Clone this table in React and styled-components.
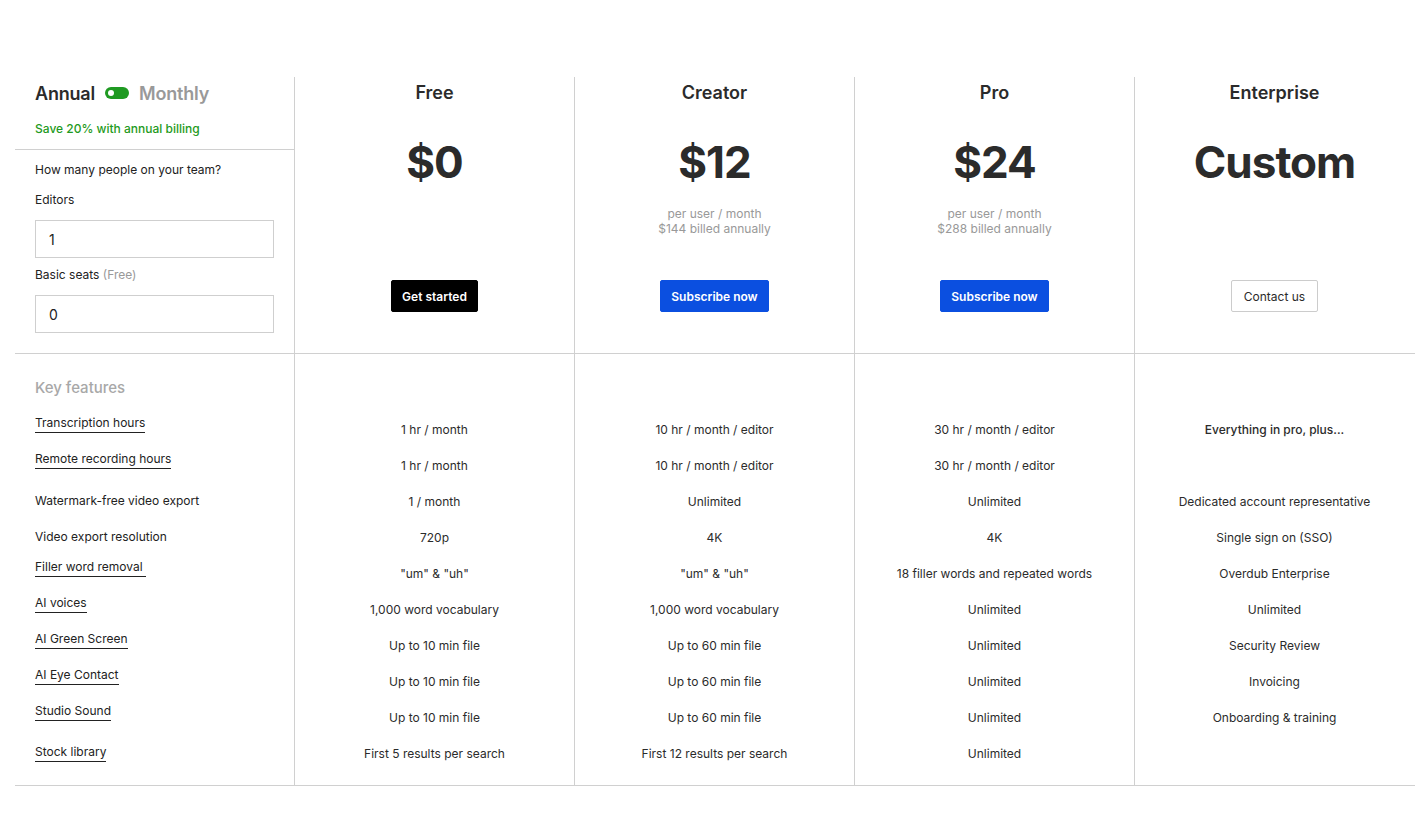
import React, { useState } from "react";
import styled, { createGlobalStyle } from "styled-components";

const GlobalStyle = createGlobalStyle`
  body {
    margin: 0;
    background: #fff;
    font-family: Inter, "Noto Sans", sans-serif;
    color: #333;
  }
`;

const Page = styled.div`
  padding: 77px 10px 28px 15px;
`;

const Section = styled.div`
  display: flex;
  width: 1400px;
  border-bottom: 1px solid #d0d0d0;
`;

const Column = styled.div`
  width: ${({ $first }) => ($first ? "279px" : "280px")};
  flex: none;
  box-sizing: border-box;
  display: flex;
  flex-direction: column;
  border-left: ${({ $first }) => ($first ? "none" : "1px solid #d0d0d0")};
`;

const PlanTop = styled(Column)`
  align-items: center;
  padding: 5px 0 41px;
`;

const BillingBlock = styled.div`
  padding: 4px 20px 12px;
  border-bottom: 1px solid #d0d0d0;
`;

const BillingRow = styled.div`
  display: flex;
  align-items: center;
  gap: 10px;
  height: 24px;
`;

const BillingLabel = styled.span`
  font-size: 18px;
  font-weight: 600;
  letter-spacing: -0.2px;
  color: ${({ $active }) => ($active ? "#2b2b2b" : "#999")};
  cursor: pointer;
`;

const Toggle = styled.button`
  position: relative;
  width: 24px;
  height: 12px;
  border: none;
  border-radius: 6px;
  background: #1f9a22;
  padding: 0;
  cursor: pointer;

  &::after {
    content: "";
    position: absolute;
    top: 3px;
    left: ${({ $on }) => ($on ? "15px" : "3px")};
    width: 6px;
    height: 6px;
    border-radius: 50%;
    background: #fff;
  }
`;

const SaveNote = styled.div`
  margin-top: 16px;
  font-size: 12px;
  line-height: 16px;
  font-weight: 500;
  color: #1f9a22;
`;

const TeamBlock = styled.div`
  padding: 12px 20px 20px;
  display: flex;
  flex-direction: column;
`;

const FieldLabel = styled.div`
  font-size: 12px;
  line-height: 16px;
  color: #222;
  margin-top: ${({ $gap }) => $gap}px;

  span {
    color: #999;
  }
`;

const Input = styled.input`
  box-sizing: border-box;
  height: 38px;
  width: 239px;
  margin-top: 12px;
  border: 1px solid #cfcfcf;
  padding: 0 13px;
  font-family: inherit;
  font-size: 14px;
  color: #222;
  outline: none;
`;

const PlanName = styled.div`
  font-size: 18px;
  line-height: 22px;
  font-weight: 600;
  color: #2b2b2b;
`;

const Price = styled.div`
  margin-top: 32px;
  font-size: 44px;
  line-height: 52px;
  font-weight: 700;
  color: #2b2b2b;
  letter-spacing: -1px;
`;

const PriceNote = styled.div`
  margin-top: 18px;
  font-size: 12px;
  line-height: 15px;
  color: #999;
  text-align: center;
`;

const Button = styled.button`
  margin-top: auto;
  height: 32px;
  padding: 0 ${({ $variant }) => ($variant === "outline" ? 12 : 10)}px;
  border-radius: 2px;
  font-family: inherit;
  font-size: 12px;
  font-weight: ${({ $variant }) => ($variant === "outline" ? 400 : 600)};
  cursor: pointer;
  border: 1px solid
    ${({ $variant }) =>
      $variant === "dark" ? "#000" : $variant === "blue" ? "#0b4fe0" : "#cccccc"};
  background: ${({ $variant }) =>
    $variant === "dark" ? "#000" : $variant === "blue" ? "#0b4fe0" : "#fff"};
  color: ${({ $variant }) => ($variant === "outline" ? "#2b2b2b" : "#fff")};
`;

const FeatureColumn = styled(Column)`
  padding: 15px 0 14px;
`;

const KeyHeading = styled.div`
  height: 36px;
  margin-bottom: 6px;
  padding: 0 20px;
  display: flex;
  align-items: center;
  font-size: 15px;
  font-weight: 500;
  color: #a8a8a8;
`;

const Cell = styled.div`
  height: 36px;
  display: flex;
  align-items: center;
  justify-content: ${({ $left }) => ($left ? "flex-start" : "center")};
  padding: 0 20px;
  font-size: 12px;
  color: #2b2b2b;
  font-weight: ${({ $strong }) => ($strong ? 500 : 400)};
  text-align: center;
`;

const FeatureLabel = styled.span`
  white-space: pre;
  line-height: 16px;
  color: #222;
  ${({ $underline }) => ($underline ? "border-bottom: 1px solid #222; padding-bottom: 1px;" : "")}
  margin-bottom: ${({ $lift }) => $lift}px;
  cursor: ${({ $underline }) => ($underline ? "help" : "default")};
`;

const plans = [
  { name: "Free", price: "$0", button: "Get started", variant: "dark" },
  {
    name: "Creator",
    price: "$12",
    note: ["per user / month", "$144 billed annually"],
    button: "Subscribe now",
    variant: "blue",
  },
  {
    name: "Pro",
    price: "$24",
    note: ["per user / month", "$288 billed annually"],
    button: "Subscribe now",
    variant: "blue",
  },
  { name: "Enterprise", price: "Custom", button: "Contact us", variant: "outline" },
];

const features = [
  { label: "Transcription hours", u: true, values: ["1 hr / month", "10 hr / month / editor", "30 hr / month / editor", "Everything in pro, plus..."] },
  { label: "Remote recording hours", u: true, values: ["1 hr / month", "10 hr / month / editor", "30 hr / month / editor", ""] },
  { label: "Watermark-free video export", values: ["1 / month", "Unlimited", "Unlimited", "Dedicated account representative"] },
  { label: "Video export resolution", values: ["720p", "4K", "4K", "Single sign on (SSO)"] },
  { label: "Filler word removal ", u: true, values: ['"um" & "uh"', '"um" & "uh"', "18 filler words and repeated words", "Overdub Enterprise"] },
  { label: "AI voices", u: true, values: ["1,000 word vocabulary", "1,000 word vocabulary", "Unlimited", "Unlimited"] },
  { label: "AI Green Screen", u: true, values: ["Up to 10 min file", "Up to 60 min file", "Unlimited", "Security Review"] },
  { label: "AI Eye Contact", u: true, values: ["Up to 10 min file", "Up to 60 min file", "Unlimited", "Invoicing"] },
  { label: "Studio Sound", u: true, values: ["Up to 10 min file", "Up to 60 min file", "Unlimited", "Onboarding & training"] },
  { label: "Stock library", u: true, flat: true, values: ["First 5 results per search", "First 12 results per search", "Unlimited", ""] },
];

export default function App() {
  const [monthly, setMonthly] = useState(false);
  const [editors, setEditors] = useState("1");
  const [seats, setSeats] = useState("0");

  return (
    <Page>
      <GlobalStyle />
      <Section>
        <Column $first>
          <BillingBlock>
            <BillingRow>
              <BillingLabel $active={!monthly} onClick={() => setMonthly(false)}>
                Annual
              </BillingLabel>
              <Toggle $on={monthly} onClick={() => setMonthly(!monthly)} aria-label="Toggle billing" />
              <BillingLabel $active={monthly} onClick={() => setMonthly(true)}>
                Monthly
              </BillingLabel>
            </BillingRow>
            <SaveNote>Save 20% with annual billing</SaveNote>
          </BillingBlock>
          <TeamBlock>
            <FieldLabel $gap={0}>How many people on your team?</FieldLabel>
            <FieldLabel $gap={14}>Editors</FieldLabel>
            <Input value={editors} onChange={(e) => setEditors(e.target.value)} />
            <FieldLabel $gap={9}>
              Basic seats <span>(Free)</span>
            </FieldLabel>
            <Input value={seats} onChange={(e) => setSeats(e.target.value)} />
          </TeamBlock>
        </Column>
        {plans.map((plan) => (
          <PlanTop key={plan.name}>
            <PlanName>{plan.name}</PlanName>
            <Price>{plan.price}</Price>
            {plan.note && (
              <PriceNote>
                {plan.note[0]}
                <br />
                {plan.note[1]}
              </PriceNote>
            )}
            <Button $variant={plan.variant}>{plan.button}</Button>
          </PlanTop>
        ))}
      </Section>
      <Section>
        <FeatureColumn $first>
          <KeyHeading>Key features</KeyHeading>
          {features.map((f) => (
            <Cell key={f.label} $left>
              <FeatureLabel $underline={f.u} $lift={f.u && !f.flat ? 11 : 0}>
                {f.label}
              </FeatureLabel>
            </Cell>
          ))}
        </FeatureColumn>
        {plans.map((plan, i) => (
          <FeatureColumn key={plan.name}>
            <KeyHeading />
            {features.map((f, r) => (
              <Cell key={f.label} $strong={i === 3 && r === 0}>
                {f.values[i]}
              </Cell>
            ))}
          </FeatureColumn>
        ))}
      </Section>
    </Page>
  );
}
